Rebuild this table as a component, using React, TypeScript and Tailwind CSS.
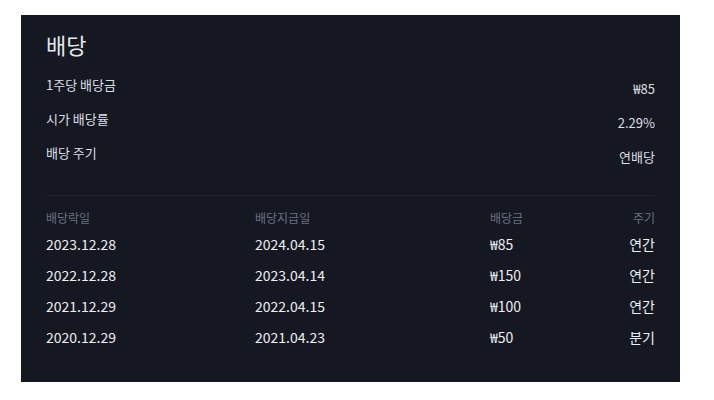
const SUMMARY = [
  { label: "1주당 배당금", value: "₩85" },
  { label: "시가 배당률", value: "2.29%" },
  { label: "배당 주기", value: "연배당" },
];

const HISTORY = [
  { exDate: "2023.12.28", payDate: "2024.04.15", amount: "₩85", cycle: "연간" },
  { exDate: "2022.12.28", payDate: "2023.04.14", amount: "₩150", cycle: "연간" },
  { exDate: "2021.12.29", payDate: "2022.04.15", amount: "₩100", cycle: "연간" },
  { exDate: "2020.12.29", payDate: "2021.04.23", amount: "₩50", cycle: "분기" },
];

const font = "font-['Noto_Sans_CJK_KR','Noto_Sans',sans-serif]";

export default function App() {
  return (
    <div className={`min-h-screen bg-white pt-[15px] pl-[21px] ${font}`}>
      <section className="w-[659px] h-[367px] bg-[#151821] px-[25px] pt-[14px]">
        <h2 className="text-[22px] leading-[30px] text-[#e5e7eb]">배당</h2>

        <div className="mt-[9px]">
          {SUMMARY.map((row) => (
            <div
              key={row.label}
              className="flex items-start justify-between h-[34px] text-[13px]"
            >
              <span className="block leading-[34px] text-[#dcdee3]">{row.label}</span>
              <span className="block leading-[34px] pt-[4px] text-[#dcdee3]">{row.value}</span>
            </div>
          ))}
        </div>

        <div className="mt-[25px] border-t border-[#1e222c]" />

        <div className="grid grid-cols-[209px_235px_1fr_auto] mt-[12px]">
          <div className="text-[12px] leading-[20px] pb-[1px] text-[#6b7080]">배당락일</div>
          <div className="text-[12px] leading-[20px] pb-[1px] text-[#6b7080]">배당지급일</div>
          <div className="text-[12px] leading-[20px] pb-[1px] text-[#6b7080]">배당금</div>
          <div className="text-[12px] leading-[20px] pb-[1px] text-[#6b7080] text-right">주기</div>
          {HISTORY.map((h) => (
            <div key={h.exDate} className="contents">
              <div className="leading-[31px] text-[14px] text-[#eceef1]">{h.exDate}</div>
              <div className="leading-[31px] text-[14px] text-[#eceef1]">{h.payDate}</div>
              <div className="leading-[31px] text-[14px] text-[#eceef1]">{h.amount}</div>
              <div className="leading-[31px] text-[14px] text-[#eceef1] text-right">{h.cycle}</div>
            </div>
          ))}
        </div>
      </section>
    </div>
  );
}
